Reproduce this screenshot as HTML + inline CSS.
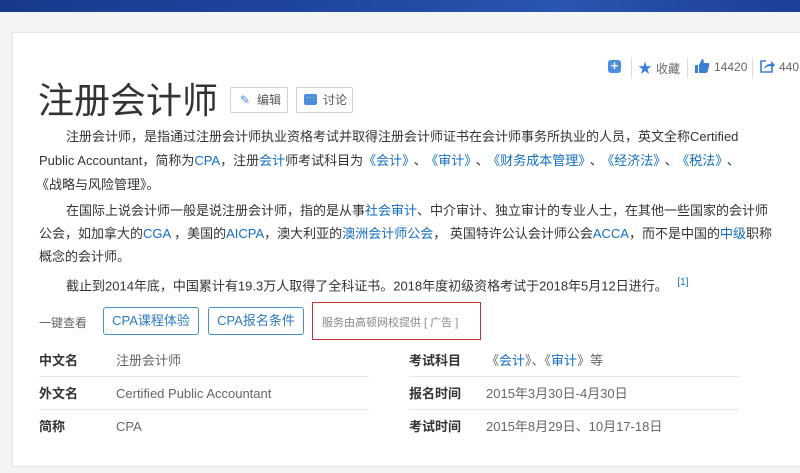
<!DOCTYPE html>
<html><head><meta charset="utf-8"><style>
*{margin:0;padding:0;box-sizing:border-box}
body{width:800px;height:473px;background:#f4f4f4;font-family:"Liberation Sans","Noto Sans CJK SC",sans-serif;color:#333;position:relative;overflow:hidden}
.top{position:absolute;left:0;top:0;width:800px;height:12px;background:linear-gradient(90deg,#173a8c,#1f46a0 40%,#2a55b0 70%,#1c3f96)}
.card{position:absolute;left:12px;top:32px;width:800px;height:435px;background:#fff;border:1px solid #e6e6e6}
.a{position:absolute;white-space:nowrap}
.p{font-size:13px;color:#333;line-height:16px}
.l{color:#136ec2}
.d{margin:0 5px}
.btn{position:absolute;border:1px solid #d0d0d0;border-radius:2px;background:#fff;font-size:12px;color:#555;height:26px;line-height:24px}
.cb{position:absolute;border:1px solid #4a90c8;border-radius:3px;color:#2f7bc0;font-size:13px;height:28px;line-height:26px;text-align:center}
.lb{font-size:13px;font-weight:bold;color:#333;line-height:16px}
.v{font-size:13px;color:#666;line-height:16px}
.sep{position:absolute;height:1px;background:#e8e8e8}
</style></head><body>
<div class="top"></div>
<div class="card"></div>
<div class="a" style="left:608px;top:60px;width:13px;height:13px;background:#4a8fde;border-radius:3px;color:#fff;font-size:13px;line-height:12px;text-align:center;font-weight:bold">+</div>
<div class="a" style="left:631px;top:58px;width:1px;height:20px;background:#ddd"></div>
<div class="a" style="left:638px;top:58px;font-size:14px;color:#3a7fd5">★</div>
<div class="a" style="left:656px;top:60px;font-size:12px;color:#666">收藏</div>
<div class="a" style="left:687px;top:58px;width:1px;height:20px;background:#ddd"></div>
<svg class="a" style="left:694px;top:58px" width="16" height="16" viewBox="0 0 16 16"><path d="M1 7h3v8H1zM5 7l3-6c2 0 2 2 1.5 4H14c1 0 1.5 1 1.2 2l-1.5 6.5c-.3.8-1 1.5-2 1.5H5z" fill="#3a7fd5"/></svg>
<div class="a" style="left:714px;top:60px;font-size:12px;color:#666">14420</div>
<div class="a" style="left:752px;top:58px;width:1px;height:20px;background:#ddd"></div>
<svg class="a" style="left:760px;top:59px" width="15" height="14" viewBox="0 0 15 14"><path d="M6 2H1v11h11V9" fill="none" stroke="#3a7fd5" stroke-width="1.6"/><path d="M4 10c1-4 4-5 7-5V2l4 4-4 4V7c-3 0-5 1-7 3z" fill="#3a7fd5"/></svg>
<div class="a" style="left:779px;top:60px;font-size:12px;color:#666">440</div>
<div class="a" style="left:38px;top:75px;font-size:36px;color:#333;font-family:'Noto Sans CJK SC',sans-serif;line-height:46px">注册会计师</div>
<div class="btn" style="left:230px;top:87px;width:58px"><span style="position:absolute;left:9px;top:0;color:#4a8fde;font-size:12px">✎</span><span style="position:absolute;left:26px">编辑</span></div>
<div class="btn" style="left:296px;top:87px;width:57px"><span style="position:absolute;left:7px;top:6px;width:13px;height:11px;background:#4a8fde;border-radius:2px;color:#fff;font-size:9px;line-height:6px;text-align:center">···</span><span style="position:absolute;left:26px">讨论</span></div>
<div class="a p" style="left:66px;top:129px">注册会计师，是指通过注册会计师执业资格考试并取得注册会计师证书在会计师事务所执业的人员，英文全称Certified</div>
<div class="a p" style="left:39px;top:153px">Public Accountant，简称为<span class="l">CPA</span>，注册<span class="l">会计</span>师考试科目为<span class="l">《会计》</span><span class="d">、</span><span class="l">《审计》</span><span class="d">、</span><span class="l">《财务成本管理》</span><span class="d">、</span><span class="l">《经济法》</span><span class="d">、</span><span class="l">《税法》</span><span class="d">、</span></div>
<div class="a p" style="left:36px;top:177px">《战略与风险管理》。</div>
<div class="a p" style="left:66px;top:203px">在国际上说会计师一般是说注册会计师，指的是从事<span class="l">社会审计</span>、中介审计、独立审计的专业人士，在其他一些国家的会计师</div>
<div class="a p" style="left:39px;top:226px">公会，如加拿大的<span class="l">CGA</span> ，美国的<span class="l">AICPA</span>，澳大利亚的<span class="l">澳洲会计师公会</span>， 英国特许公认会计师公会<span class="l">ACCA</span>，而不是中国的<span class="l">中级</span>职称</div>
<div class="a p" style="left:39px;top:249px">概念的会计师。</div>
<div class="a p" style="left:66px;top:275px">截止到2014年底，中国累计有19.3万人取得了全科证书。2018年度初级资格考试于2018年5月12日进行。 <sup class="l" style="font-size:10px;margin-left:6px">[1]</sup></div>
<div class="a" style="left:39px;top:314px;font-size:12px;color:#666">一键查看</div>
<div class="cb" style="left:103px;top:307px;width:96px">CPA课程体验</div>
<div class="cb" style="left:208px;top:307px;width:96px">CPA报名条件</div>
<div class="a" style="left:312px;top:302px;width:169px;height:38px;border:1px solid #c83232"></div>
<div class="a" style="left:322px;top:314px;font-size:11px;color:#888">服务由高顿网校提供 [ 广告 ]</div>
<div class="a lb" style="left:39px;top:353px">中文名</div>
<div class="a v" style="left:116px;top:353px">注册会计师</div>
<div class="a lb" style="left:409px;top:353px">考试科目</div>
<div class="a v" style="left:486px;top:353px">《<span class="l">会计</span>》、《<span class="l">审计</span>》等</div>
<div class="sep" style="left:39px;top:376px;width:330px"></div><div class="sep" style="left:409px;top:376px;width:330px"></div>
<div class="a lb" style="left:39px;top:386px">外文名</div>
<div class="a v" style="left:116px;top:386px">Certified Public Accountant</div>
<div class="a lb" style="left:409px;top:386px">报名时间</div>
<div class="a v" style="left:486px;top:386px">2015年3月30日-4月30日</div>
<div class="sep" style="left:39px;top:409px;width:330px"></div><div class="sep" style="left:409px;top:409px;width:330px"></div>
<div class="a lb" style="left:39px;top:419px">简称</div>
<div class="a v l" style="left:116px;top:419px">CPA</div>
<div class="a lb" style="left:409px;top:419px">考试时间</div>
<div class="a v" style="left:486px;top:419px">2015年8月29日、10月17-18日</div>
</body></html>
